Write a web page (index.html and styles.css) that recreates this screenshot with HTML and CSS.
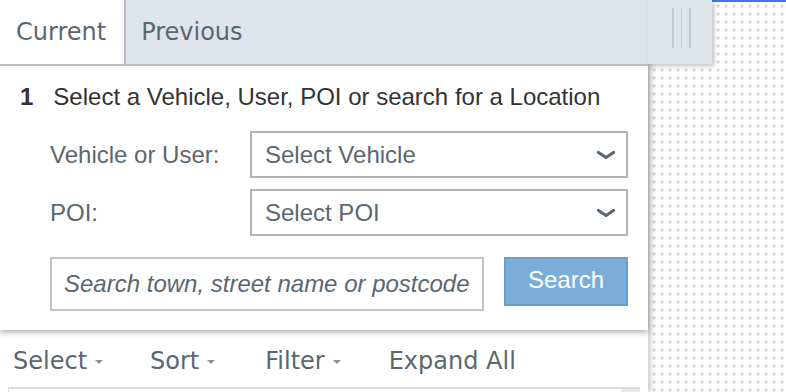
FILE: index.html
```html
<!DOCTYPE html>
<html>
<head>
<meta charset="utf-8">
<link rel="stylesheet" href="styles.css">
</head>
<body>
<div class="app">
  <div class="mapbar"></div>
  <aside class="sidebar">
    <div class="toolbar">
      <span class="tool">Select <i class="caret"></i></span>
      <span class="tool">Sort <i class="caret"></i></span>
      <span class="tool">Filter <i class="caret"></i></span>
      <span class="tool">Expand All</span>
    </div>
    <div class="list"><div class="scroll"></div></div>
  </aside>
  <section class="panel">
    <div class="tabs">
      <div class="tab active">Current</div>
      <div class="tab">Previous</div>
    </div>
    <div class="handle"><span></span><span></span><span></span></div>
    <h2 class="step"><b>1</b><span>Select a Vehicle, User, POI or search for a Location</span></h2>
    <div class="form">
      <label class="lbl">Vehicle or User:</label>
      <div class="select"><span>Select Vehicle</span>
        <svg width="20" height="10" viewBox="0 0 20 10"><polyline points="2.5,2.5 10,7.5 17.5,2.5" fill="none" stroke="#5b6770" stroke-width="3.2" stroke-linecap="round" stroke-linejoin="round"/></svg>
      </div>
      <label class="lbl">POI:</label>
      <div class="select"><span>Select POI</span>
        <svg width="20" height="10" viewBox="0 0 20 10"><polyline points="2.5,2.5 10,7.5 17.5,2.5" fill="none" stroke="#5b6770" stroke-width="3.2" stroke-linecap="round" stroke-linejoin="round"/></svg>
      </div>
    </div>
    <div class="searchrow">
      <div class="search-input">Search town, street name or postcode</div>
      <button class="btn">Search</button>
    </div>
  </section>
</div>
</body>
</html>
```
FILE: styles.css
```css
html, body { margin: 0; padding: 0; }
body {
  width: 786px; height: 392px; overflow: hidden;
  background-color: #fff;
  background-image: radial-gradient(circle, #e0e0e0 1.5px, rgba(255,255,255,0) 2px);
  background-size: 8px 8px;
  background-position: 2px 2px;
  font-family: "Liberation Sans", Arial, sans-serif;
}
.app { position: relative; width: 786px; height: 392px; }
.mapbar { position: absolute; top: 0; left: 712px; right: 0; height: 2px; background: #3c7bdb; }

.sidebar {
  width: 648px; height: 392px; background: #fff;
  box-shadow: 2px 0 6px rgba(0,0,0,0.25);
  box-sizing: border-box; padding-top: 342px;
  display: flex; flex-direction: column;
}
.toolbar {
  display: flex; align-items: center; padding-left: 13px; height: 38px;
  font-family: "DejaVu Sans", Verdana, sans-serif; font-size: 24px; color: #5b6770;
}
.tool { display: inline-flex; align-items: center; }
.tool:nth-child(1) { margin-right: 47px; }
.tool:nth-child(2) { margin-right: 50px; }
.tool:nth-child(3) { margin-right: 48px; }
.caret {
  display: inline-block; width: 0; height: 0; margin-left: 8px; margin-top: 2px;
  border-left: 4.5px solid transparent; border-right: 4.5px solid transparent; border-top: 4.5px solid #8a939a;
}
.list {
  margin: 7px 0 0 8px; width: 632px; flex: 1;
  border-top: 2px solid #dcdcdc; border-left: 1px solid #dcdcdc; box-sizing: border-box;
  display: flex; justify-content: flex-end;
}
.scroll { width: 19px; background: #e8e8e8; }

.panel {
  position: absolute; top: 0; left: 0; width: 648px; height: 330px;
  background: #fff; box-shadow: 0 2px 6px rgba(0,0,0,0.35);
}
.tabs {
  display: flex; height: 64px; background: #dfe4eb;
  border-bottom: 2px solid #b9bdc1;
}
.tab {
  font-family: "DejaVu Sans", Verdana, sans-serif; font-size: 24px; color: #5b6770;
  display: flex; align-items: center; padding: 0 18px 0 15px; height: 64px;
}
.tab.active { background: #fff; border-right: 2px solid #b9bdc1; padding: 0 18px 0 16px; }
.handle {
  position: absolute; top: 0; left: 648px; width: 64px; height: 64px;
  background: #dfe4eb; box-shadow: 2px 2px 4px rgba(0,0,0,0.25);
  display: flex; gap: 7px; padding: 8px 0 0 24px; box-sizing: border-box;
}
.handle span { width: 1.5px; height: 40px; background: #c3c7cc; }

.step {
  margin: 17px 0 0 20px; font-weight: normal; font-size: 24px; color: #333;
  display: flex; gap: 20px; line-height: 28px;
}
.step b { font-weight: bold; }
.form {
  display: grid; grid-template-columns: 200px 378px; row-gap: 11px;
  margin: 20px 0 0 50px; align-items: center;
}
.lbl { font-size: 24px; color: #5b6770; }
.select {
  height: 47px; box-sizing: border-box; border: 2px solid #b3b3b3; background: #fff;
  display: flex; align-items: center; justify-content: space-between; padding: 0 10px 0 13px;
  font-size: 24px; color: #5b6770;
}
.searchrow { display: flex; margin: 21px 0 0 50px; gap: 20px; align-items: flex-start; }
.search-input {
  width: 434px; height: 54px; box-sizing: border-box; border: 2px solid #c4c4c4;
  display: flex; align-items: center; padding-left: 12px;
  font-size: 24px; font-style: italic; color: #5b6770;
}
.btn {
  width: 124px; height: 49px; box-sizing: border-box; border: 2px solid #6b9cc6;
  background: #7aaed8; color: #fff; font-family: "Liberation Sans", Arial, sans-serif; font-size: 24px;
  padding: 0 0 4px 0;
}
```
